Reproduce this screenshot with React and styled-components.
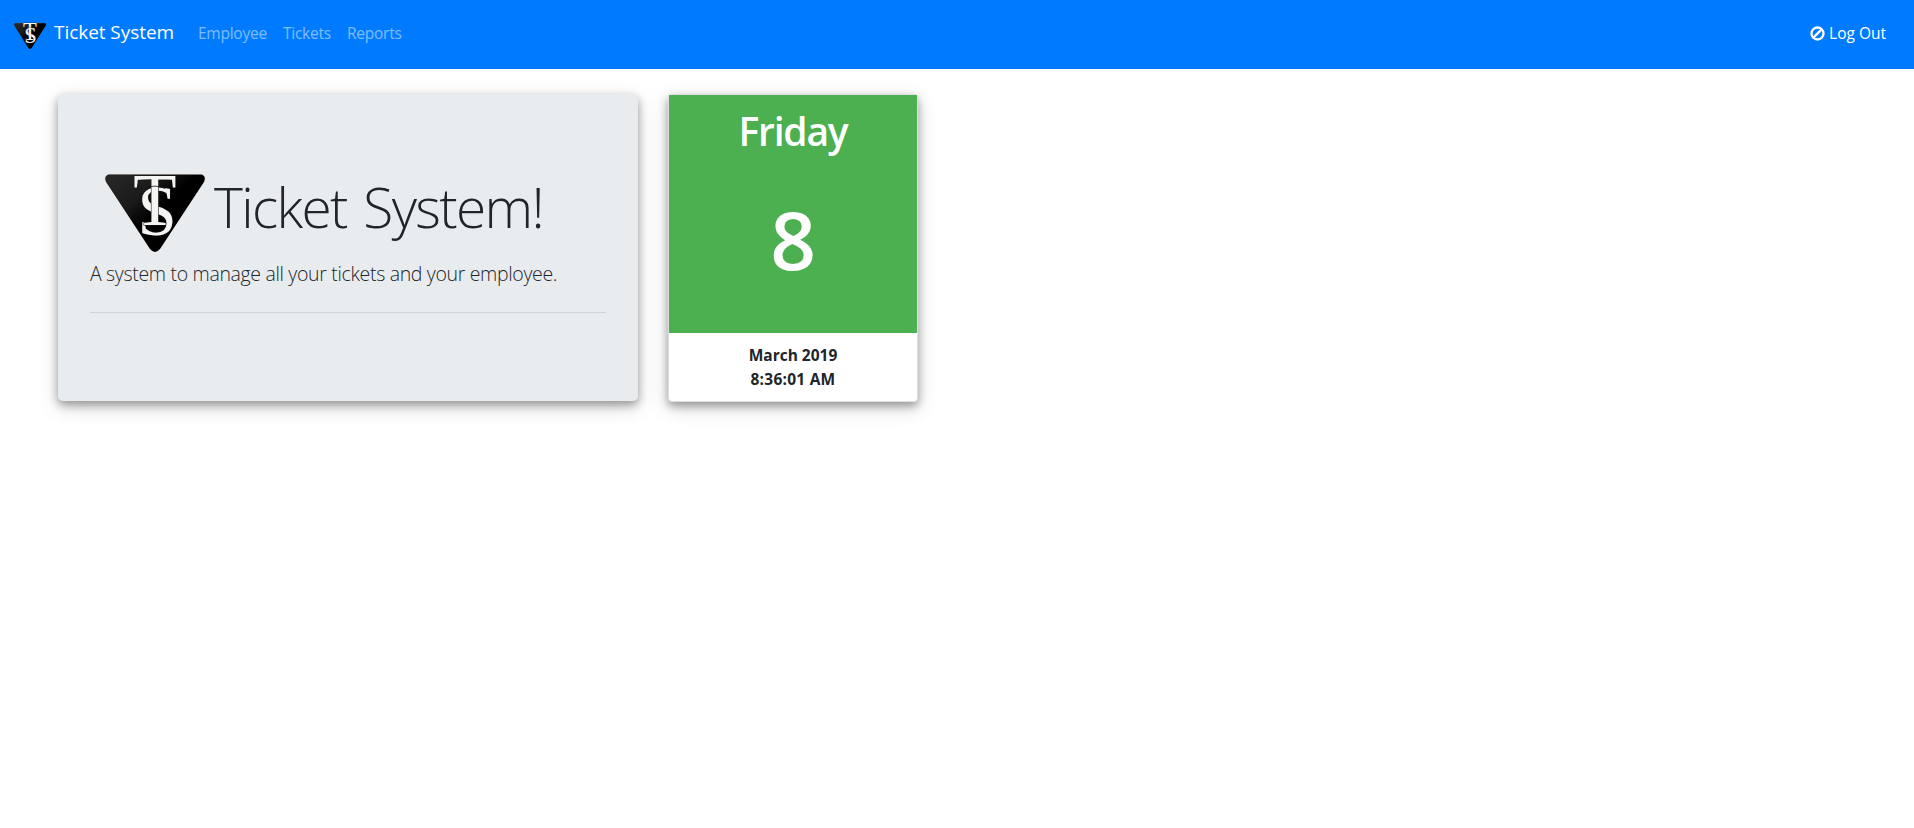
import React from "react";
import styled, { createGlobalStyle } from "styled-components";

const GlobalStyle = createGlobalStyle`
  *, *::before, *::after { box-sizing: border-box; }
  body {
    margin: 0;
    background: #fff;
    color: #212529;
    font-family: "Segoe UI", "Open Sans", "Noto Sans", sans-serif;
    font-size: 16px;
    line-height: 24px;
  }
`;

const Navbar = styled.nav`
  display: flex;
  align-items: flex-start;
  height: 69px;
  padding: 17px 28px 0 14px;
  background: #007bff;
`;

const Brand = styled.a`
  display: flex;
  align-items: flex-start;
  gap: 8px;
  width: 184px;
  color: #fff;
  font-size: 19px;
  line-height: 30px;
  letter-spacing: -0.05px;
  white-space: nowrap;
`;

const BrandLogo = styled.span`
  display: block;
  padding-top: 6px;
  line-height: 0;
`;

const NavLinks = styled.div`
  display: flex;
  gap: 16px;
  padding-top: 4px;
`;

const NavLink = styled.a`
  width: ${(p) => p.$width}px;
  color: rgba(255, 255, 255, 0.5);
  font-size: 15.5px;
  letter-spacing: -0.25px;
  white-space: nowrap;
`;

const LogOut = styled.a`
  display: flex;
  gap: 4px;
  margin-left: auto;
  padding-top: 4px;
  color: #fff;
  font-size: 15.5px;
  letter-spacing: 0;
  white-space: nowrap;

  svg { margin-top: 5px; }
`;

const Dashboard = styled.main`
  display: flex;
  align-items: flex-start;
  gap: 30px;
  padding: 25px 58px;
`;

const cardShadow = "0 4px 8px 0 rgba(0, 0, 0, 0.32), 0 6px 20px 0 rgba(0, 0, 0, 0.17)";

const Welcome = styled.section`
  width: 580px;
  height: 307px;
  padding: 64px 32px;
  border-radius: 5px;
  background: #e9ecef;
  box-shadow: ${cardShadow};
`;

const Title = styled.h1`
  display: flex;
  align-items: flex-start;
  gap: 9px;
  height: 94px;
  margin: 0;
  padding: 16px 0 0 15px;
  font-size: 55px;
  font-weight: 300;
  line-height: 65px;
  letter-spacing: -1.65px;
  word-spacing: 4px;
  white-space: nowrap;
`;

const Lead = styled.p`
  margin: 7px 0 0;
  font-size: 19.5px;
  font-weight: 300;
  line-height: 30px;
  letter-spacing: -0.33px;
  white-space: nowrap;
`;

const Divider = styled.hr`
  margin: 23px 0 0;
  border: 0;
  border-top: 1px solid rgba(0, 0, 0, 0.1);
`;

const Calendar = styled.section`
  width: 250px;
  height: 308px;
  border: 1px solid #dfdfdf;
  border-radius: 4px;
  background: #fff;
  box-shadow: ${cardShadow};
  text-align: center;
`;

const DayPanel = styled.div`
  height: 238px;
  padding-top: 12px;
  background: #4caf50;
  color: #fff;
  font-weight: 600;
`;

const Weekday = styled.div`
  font-size: 39px;
  line-height: 48px;
  letter-spacing: -1.2px;
`;

const DayNumber = styled.div`
  margin-top: 36px;
  font-size: 80px;
  line-height: 96px;
`;

const DateFooter = styled.div`
  padding-top: 10px;
  font-size: 15.5px;
  font-weight: 700;
`;

const Time = styled.div`
  letter-spacing: 0.25px;
`;

function Logo({ width, height, id }) {
  return (
    <svg width={width} height={height} viewBox="0 0 100 78" preserveAspectRatio="none" overflow="visible" aria-hidden="true">
      <defs>
        <linearGradient id={id} x1="0" y1="0" x2="0.75" y2="0.65">
          <stop offset="0.1" stopColor="#262626" />
          <stop offset="0.45" stopColor="#1a1a1a" />
          <stop offset="0.7" stopColor="#000" />
        </linearGradient>
      </defs>
      <path d="M5 0H95Q102 1.5 99 8L55 75Q50 81 45 75L1 8Q-2 1.5 5 0Z" fill={`url(#${id})`} />
      <path d="M4 .5H96" stroke="#777" strokeWidth="1" />
      <g fill="#f4f4f2" stroke="#151515" strokeWidth="1.2" paintOrder="stroke" fontFamily="Liberation Serif, serif" textAnchor="middle" letterSpacing="0" wordSpacing="0">
        <text transform="translate(52 61) scale(.98 1)" fontSize="72">S</text>
        <text transform="translate(50 51) scale(.97 1)" fontSize="73">T</text>
      </g>
      <path d="M41 14Q50 10 60 14.5" fill="none" stroke="#151515" strokeWidth="0.8" />
    </svg>
  );
}

function BanIcon() {
  return (
    <svg width="15" height="15" viewBox="0 0 15 15" fill="none" stroke="currentColor" strokeWidth="2.3">
      <circle cx="7.5" cy="7.5" r="6" />
      <path d="M3.4 11.6L11.6 3.4" />
    </svg>
  );
}

export default function App() {
  return (
    <>
      <GlobalStyle />
      <Navbar>
        <Brand>
          <BrandLogo><Logo width={32} height={26} id="brand-shade" /></BrandLogo>
          Ticket System
        </Brand>
        <NavLinks>
          <NavLink $width={69}>Employee</NavLink>
          <NavLink $width={48}>Tickets</NavLink>
          <NavLink $width={55}>Reports</NavLink>
        </NavLinks>
        <LogOut><BanIcon />Log Out</LogOut>
      </Navbar>
      <Dashboard>
        <Welcome>
          <Title>
            <Logo width={100} height={78} id="title-shade" />
            Ticket System!
          </Title>
          <Lead>A system to manage all your tickets and your employee.</Lead>
          <Divider />
        </Welcome>
        <Calendar>
          <DayPanel>
            <Weekday>Friday</Weekday>
            <DayNumber>8</DayNumber>
          </DayPanel>
          <DateFooter>
            <div>March 2019</div>
            <Time>8:36:01 AM</Time>
          </DateFooter>
        </Calendar>
      </Dashboard>
    </>
  );
}
